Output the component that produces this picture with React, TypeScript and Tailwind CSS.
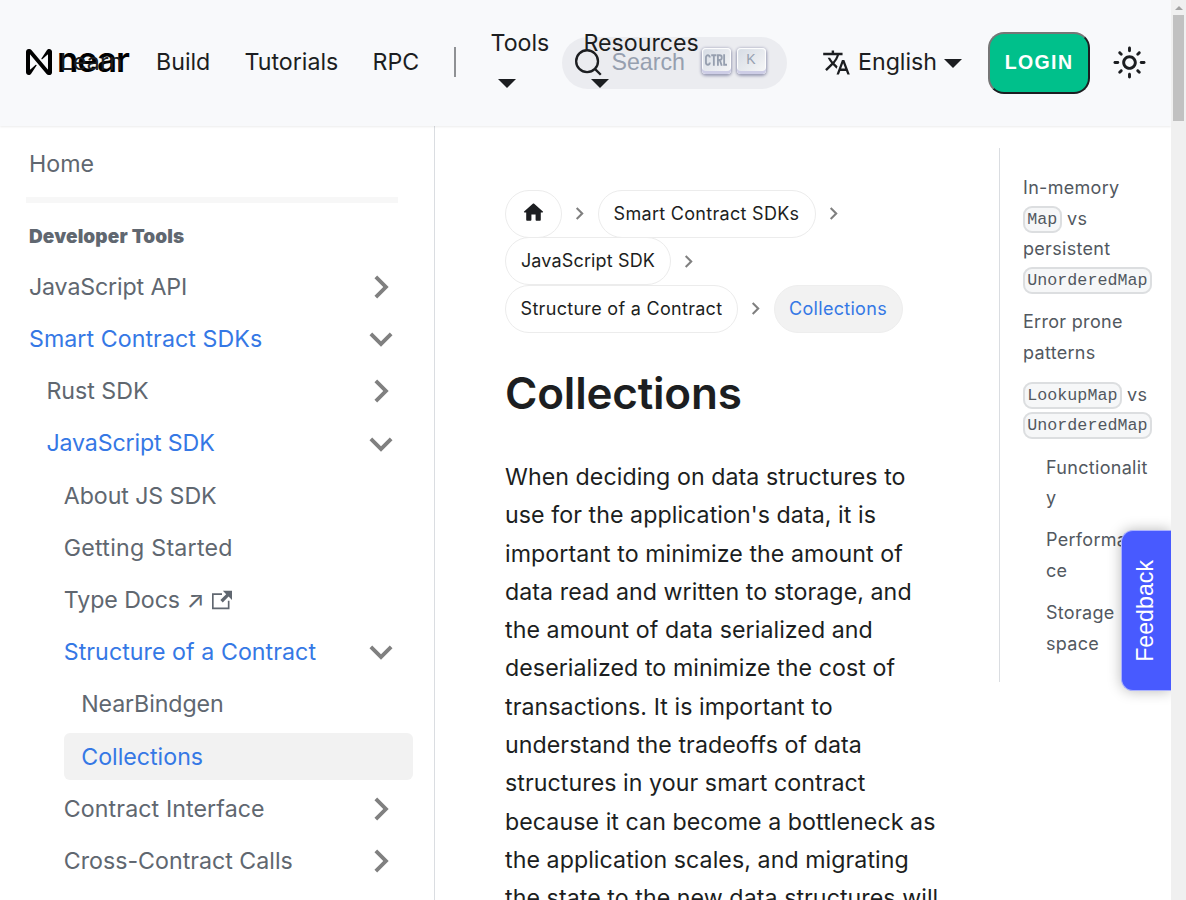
import React from "react";

const Chevron = ({ down = false, size = 46, fill = "#808080" }: { down?: boolean; size?: number; fill?: string }) => (
  <svg width={size} height={size} viewBox="0 0 24 24" fill={fill} className={down ? "" : "-rotate-90"}>
    <path d="M7.41 8.59 12 13.17l4.59-4.58L18 10l-6 6-6-6 1.41-1.41z" />
  </svg>
);

const Caret = () => (
  <svg width="18" height="9" viewBox="0 0 18 9" fill="#1c1e21" className="shrink-0">
    <path d="M0 0h18L9 9z" />
  </svg>
);

type Item = {
  label: string;
  level: number;
  state?: "open" | "closed";
  active?: boolean;
  current?: boolean;
  external?: boolean;
  tracking?: string;
};

const items: Item[] = [
  { label: "JavaScript API", level: 0, state: "closed", tracking: "tracking-[-0.14px]" },
  { label: "Smart Contract SDKs", level: 0, state: "open", active: true, tracking: "tracking-[0.06px]" },
  { label: "Rust SDK", level: 1, state: "closed" },
  { label: "JavaScript SDK", level: 1, state: "open", active: true, tracking: "tracking-[-0.14px]" },
  { label: "About JS SDK", level: 2, tracking: "tracking-[-0.08px]" },
  { label: "Getting Started", level: 2, tracking: "tracking-[0.25px]" },
  { label: "Type Docs ↗", level: 2, external: true, tracking: "tracking-[-0.08px]" },
  { label: "Structure of a Contract", level: 2, state: "open", active: true, tracking: "tracking-[0.05px]" },
  { label: "NearBindgen", level: 3, tracking: "tracking-[-0.1px]" },
  { label: "Collections", level: 3, active: true, current: true },
  { label: "Contract Interface", level: 2, state: "closed", tracking: "tracking-[0.1px]" },
  { label: "Cross-Contract Calls", level: 2, state: "closed" },
];

const indent = ["ml-[11.6px]", "ml-[29px]", "ml-[46.4px]", "ml-[63.8px]"];

function SidebarItem({ item }: { item: Item }) {
  return (
    <li
      className={`mb-[5.8px] mr-[21px] flex h-[46.4px] items-center justify-between whitespace-nowrap rounded-[6px] ${
        item.current ? "-ml-0 bg-[#f2f2f2]" : ""
      } pl-[17.4px] ${indent[item.level]} ${item.active ? "text-[#3578e5]" : "text-[#606770]"}`}
    >
      <span className={`flex items-center ${item.tracking ?? ""}`}>
        {item.label}
        {item.external && (
          <svg width="20" height="20" viewBox="0 0 24 24" fill="currentColor" className="ml-[8px]">
            <path d="M21 13v10h-21v-19h12v2h-10v15h17v-8h2zm3-12h-10.988l4.035 4-6.977 7.07 2.828 2.828 6.977-7.07 4.125 4.172v-11z" />
          </svg>
        )}
      </span>
      {item.state && (
        <span className="mr-[9px] flex">
          <Chevron down={item.state === "open"} />
        </span>
      )}
    </li>
  );
}

const Crumb = ({ children, last = false, active = false, width }: { children: React.ReactNode; last?: boolean; active?: boolean; width: string }) => (
  <li className="flex h-[47.6px] items-center">
    <span
      className={`flex h-[48px] items-center justify-center whitespace-nowrap rounded-full border ${width} ${
        active ? "border-[#eeeeee] bg-[#f2f2f2] text-[#3578e5]" : "border-[#ececec] text-[#1c1e21]"
      }`}
    >
      {children}
    </span>
    {!last && (
      <span className="flex w-[35.5px] justify-center">
        <Chevron size={25} />
      </span>
    )}
  </li>
);

const Code = ({ children }: { children: React.ReactNode }) => (
  <code className="rounded-[9px] border-2 border-[#dcdee0] bg-[#f6f7f8] px-[2.3px] py-[2px] align-middle font-['Liberation_Mono',monospace] text-[16.7px] leading-[22px] tracking-normal">
    {children}
  </code>
);

const Key = ({ children }: { children: React.ReactNode }) => (
  <span className="flex h-[26px] w-[29px] items-center justify-center rounded-[4px] bg-gradient-to-br from-[#d5dbe4] to-[#f8f8f8] pb-[3px] text-[#969faf] shadow-[inset_0_-3px_0_0_#cdcde6,inset_0_0_1px_1px_#fff,0_1px_3px_1px_rgba(30,35,90,0.4)]">
    {children}
  </span>
);

function Header() {
  return (
    <header className="relative z-10 flex h-[126px] w-full shrink-0 items-center whitespace-nowrap bg-[#f8f9fb] pb-[2px] pl-[26px] text-[#1c1e21] shadow-[0_1px_2px_0_rgba(0,0,0,0.08)]">
      <div className="flex w-[34px] items-center text-black">
        <svg width="26" height="26" viewBox="0 0 90 90" fill="currentColor" className="shrink-0">
          <path d="M72.2 4.6 53.4 32.5c-1.3 1.9 1.2 4.2 3 2.6L74.9 19c.5-.4 1.2-.1 1.2.6v50.3c0 .7-.9 1-1.3.5L18.8 3.4C17 1.2 14.4 0 11.5 0h-2C4.300 0 0 4.300 0 9.600v70.800C0 85.700 4.300 90 9.600 90c3.300 0 6.400-1.700 8.200-4.600l18.800-27.900c1.300-1.900-1.200-4.200-3-2.600L15.100 71c-.5.4-1.200.1-1.200-.6V20.100c0-.7.9-1 1.300-.5l56 67c1.800 2.200 4.500 3.400 7.300 3.400h2c5.300 0 9.600-4.300 9.600-9.600V9.600C90 4.300 85.700 0 80.400 0c-3.400 0-6.500 1.700-8.200 4.600z" />
        </svg>
        <span className="-mt-[6px] ml-[5px] text-[35px] font-semibold leading-none tracking-[-1.2px]">near</span>
      </div>
      <a className="w-[96px]">Learn</a>
      <a className="w-[88.500px]">Build</a>
      <a className="w-[128px]">Tutorials</a>
      <a className="w-[81.500px]">RPC</a>
      <span className="h-[30px] w-[2px] bg-[#8f9194]" />
      <div className="-mt-[8px] ml-[34.500px] flex w-[93px] flex-col gap-[22px]">
        <span className="leading-[28px]">Tools</span>
        <span className="ml-[7px] flex"><Caret /></span>
      </div>
      <div className="z-10 -mt-[8px] flex w-0 flex-col gap-[22px]">
        <span className="leading-[28px]">Resources</span>
        <span className="ml-[7.500px] flex"><Caret /></span>
      </div>
      <button className="-ml-[21.500px] mt-[2px] flex h-[52px] w-[225px] items-center rounded-full bg-[#ebecf0] pl-[12px]">
        <svg width="29" height="29" viewBox="0 0 20 20" fill="none" stroke="#1c1e21" strokeWidth="1.6" className="-mt-[2px] overflow-visible">
          <path d="m14.386 14.386 4.088 4.088-4.088-4.088A7.533 7.533 0 1 1 3.733 3.733a7.533 7.533 0 0 1 10.653 10.653z" />
        </svg>
        <span className="-mt-[2px] ml-[8.500px] w-[90px] text-left font-['Liberation_Sans',sans-serif] text-[23.2px] text-[#969faf]">Search</span>
        <span className="-mt-[4px] flex gap-[6px]">
          <Key>
            <svg width="22" height="12" viewBox="0 0 23 12" fill="none" stroke="#969faf" strokeWidth="1.9">
              <path d="M5 3.500V3a2 2 0 0 0-4 0v6a2 2 0 0 0 4 0v-.5M6.500 1H12M9.250 1v11M13.500 12V1h2a2 2 0 0 1 2 2v1a2 2 0 0 1-2 2h-2M15.500 6l2 6M20 0v11h3" />
            </svg>
          </Key>
          <Key><span className="-mt-[2px] font-['Liberation_Sans',sans-serif] text-[14px] leading-none">K</span></Key>
        </span>
      </button>
      <div className="ml-[35px] flex w-[166px] items-center">
        <svg width="29" height="29" viewBox="0 0 24 24" fill="currentColor">
          <path d="M12.870 15.070l-2.540-2.510.03-.03c1.740-1.940 2.980-4.170 3.710-6.530H17V4h-7V2H8v2H1v1.990h11.170C11.500 7.920 10.440 9.750 9 11.350 8.070 10.320 7.300 9.190 6.690 8h-2c.73 1.630 1.730 3.170 2.980 4.560l-5.090 5.020L4 19l5-5 3.110 3.110.76-2.040zM18.500 10h-2L12 22h2l1.120-3h4.750L21 22h2l-4.500-12zm-2.620 7l1.620-4.330L19.120 17h-3.240z" />
        </svg>
        <span className="ml-[7px] mr-[7px]">English</span>
        <span className="mt-[2px] flex"><Caret /></span>
      </div>
      <button className="mt-[2px] h-[62px] w-[102px] shrink-0 rounded-[16px] border-2 border-b-[#1c1e21] border-l-[#767676] border-r-[#1c1e21] border-t-[#767676] bg-[#00c08b] pb-[2px] font-['Liberation_Sans',sans-serif] text-[19.500px] font-bold tracking-[1.400px] text-white">
        LOGIN
      </button>
      <svg width="35" height="35" viewBox="0 0 24 24" fill="currentColor" className="ml-[22px] shrink-0">
        <path d="M12,9c1.650,0,3,1.350,3,3s-1.350,3-3,3s-3-1.350-3-3S10.350,9,12,9 M12,7c-2.760,0-5,2.240-5,5s2.240,5,5,5s5-2.240,5-5 S14.760,7,12,7L12,7z M2,13l2,0c0.550,0,1-0.450,1-1s-0.450-1-1-1l-2,0c-0.550,0-1,0.450-1,1S1.450,13,2,13z M20,13l2,0c0.550,0,1-0.450,1-1 s-0.450-1-1-1l-2,0c-0.550,0-1,0.450-1,1S19.450,13,20,13z M11,2v2c0,0.550,0.450,1,1,1s1-0.450,1-1V2c0-0.550-0.450-1-1-1S11,1.450,11,2z M11,20v2c0,0.550,0.450,1,1,1s1-0.450,1-1v-2c0-0.550-0.450-1-1-1C11.450,19,11,19.450,11,20z M5.990,4.580c-0.390-0.390-1.030-0.390-1.410,0 c-0.390,0.390-0.390,1.030,0,1.410l1.060,1.060c0.390,0.390,1.030,0.390,1.410,0s0.390-1.030,0-1.410L5.990,4.580z M18.360,16.950 c-0.390-0.390-1.030-0.390-1.410,0c-0.390,0.390-0.390,1.030,0,1.410l1.060,1.060c0.390,0.390,1.030,0.390,1.410,0c0.390-0.390,0.390-1.030,0-1.410 L18.360,16.950z M19.420,5.990c0.390-0.390,0.390-1.030,0-1.410c-0.390-0.390-1.030-0.390-1.410,0l-1.060,1.060c-0.390,0.390-0.390,1.030,0,1.410 s1.030,0.390,1.410,0L19.420,5.990z M7.050,18.360c0.390-0.390,0.390-1.030,0-1.410c-0.390-0.390-1.030-0.390-1.410,0l-1.060,1.060 c-0.390,0.390-0.390,1.030,0,1.410s1.030,0.390,1.410,0L7.050,18.360z" />
      </svg>
    </header>
  );
}

export default function App() {
  return (
    <div className="flex h-[900px] w-[1186px] overflow-hidden bg-white font-['Inter',sans-serif] text-[23.2px] leading-[38.28px] text-[#1c1e21]">
      <div className="relative flex w-[1171px] flex-col overflow-hidden">
        <Header />
        <div className="flex min-h-0 flex-1">
          <aside className="w-[435px] shrink-0 overflow-hidden border-r border-[#dadde1] pt-[15px]">
            <div className="flex h-[46.400px] items-center pl-[29px] text-[#606770]">Home</div>
            <div className="ml-[26px] mt-[10px] h-[6px] w-[372px] bg-[#f7f7f7]" />
            <div className="mt-[14px] flex h-[40px] items-center pl-[29px] text-[19px] font-[900] tracking-[0.12px] text-[#606770]">Developer Tools</div>
            <ul className="mt-[6.400px]">
              {items.map((i) => <SidebarItem key={i.label} item={i} />)}
            </ul>
          </aside>
          <main className="w-[564px] shrink-0 overflow-hidden pl-[70px] pt-[64px]">
            <ul className="flex w-[440px] flex-wrap text-[18px] tracking-[0.3px]">
              <Crumb width="w-[57px]">
                <svg width="25" height="25" viewBox="0 0 24 24" fill="#1c1e21" className="-ml-px -mt-[3px]">
                  <path d="M10 19v-5h4v5c0 .55.450 1 1 1h3c.55 0 1-.45 1-1v-7h1.700c.46 0 .68-.57.33-.87L12.670 3.600c-.38-.34-.96-.34-1.340 0l-8.360 7.530c-.34.3-.13.870.330.870H5v7c0 .55.450 1 1 1h3c.55 0 1-.45 1-1z" />
                </svg>
              </Crumb>
              <Crumb width="w-[218px]">Smart Contract SDKs</Crumb>
              <Crumb width="w-[166px]"><span className="tracking-[0.15px]">JavaScript SDK</span></Crumb>
              <Crumb width="w-[233px]">Structure of a Contract</Crumb>
              <Crumb width="w-[129px]" active last>Collections</Crumb>
            </ul>
            <h1 className="mt-[33px] text-[44px] font-semibold leading-[55px] tracking-[-0.2px]">Collections</h1>
            <p className="mt-[37.300px] w-[441px] tracking-[0.06px]">
              When deciding on data structures to use for the application's data, it is important to minimize the amount of data read and written to storage, and the amount of data serialized and deserialized to minimize the cost of transactions. It is important to understand the tradeoffs of data structures in your smart contract because it can become a bottleneck as the application scales, and migrating the state to the new data structures will likely be a challenge.
            </p>
          </main>
          <nav className="mt-[22px] h-[534px] w-[160px] border-l border-[#dadde1] pl-[23px] pt-[25px] text-[18px] leading-[30.600px] tracking-[0.3px] text-[#525860]">
            <ul className="flex w-[130px] flex-col gap-[11.600px]">
              <li>In-memory<br /><Code>Map</Code> vs<br />persistent<br /><Code>UnorderedMap</Code></li>
              <li>Error prone<br />patterns</li>
              <li><Code>LookupMap</Code> vs<br /><Code>UnorderedMap</Code></li>
              <li className="ml-[23px]">Functionalit<br />y</li>
              <li className="ml-[23px]">Performan<br />ce</li>
              <li className="ml-[23px]">Storage<br />space</li>
            </ul>
          </nav>
        </div>
        <button className="absolute right-0 top-[530px] z-20 flex h-[161px] w-[50px] items-center justify-center rounded-l-[12px] border border-r-0 border-[#aab1ff] bg-[#485aff] pr-[2px] font-['Liberation_Sans',sans-serif] text-[23.200px] text-white shadow-[0_0_14px_rgba(0,0,0,0.28)]">
          <span className="rotate-180 [writing-mode:vertical-rl]">Feedback</span>
        </button>
      </div>
      <div className="flex w-[15px] flex-col items-center bg-[#f0f0f0] pt-[6px]">
        <svg width="8" height="4" viewBox="0 0 8 4" fill="#a3a3a3"><path d="M4 0l4 4H0z" /></svg>
        <div className="mt-[5px] h-[106px] w-[11px] bg-[#c1c1c1]" />
      </div>
    </div>
  );
}
